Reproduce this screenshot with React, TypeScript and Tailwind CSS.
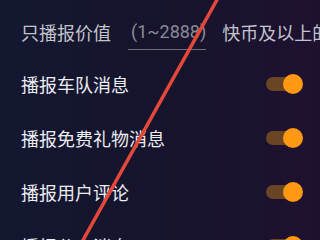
import React from "react";

function Toggle() {
  return (
    <div className="relative w-[37px] h-[20px] flex items-center">
      <div className="w-[34px] h-[14px] rounded-full bg-[#6a4524]" />
      <div className="absolute right-0 top-0 w-[20px] h-[20px] rounded-full bg-[#ff9812]" />
    </div>
  );
}

const rows = ["播报车队消息", "播报免费礼物消息", "播报用户评论", "播报分享消息"];

export default function App() {
  return (
    <div
      className="relative w-[320px] h-[240px] overflow-hidden bg-gradient-to-r from-[#131730] via-[#16142c] to-[#1e1130]"
      style={{ fontFamily: '"Noto Sans CJK SC", "Noto Sans", sans-serif' }}
    >
      <div className="flex flex-col">
        <div className="h-[57px] pt-[6px] flex items-center pl-[21px] whitespace-nowrap">
          <span className="text-[18px] leading-none text-[#c4c4cc]">只播报价值</span>
          <div className="ml-[17px] w-[80px] relative flex items-center h-[32px]">
            <span
              className="pl-[3px] text-[18px] leading-none text-[#8a8a96]"
              style={{ fontFamily: 'Roboto, "Noto Sans", sans-serif' }}
            >
              (1~2888)
            </span>
            <div className="absolute left-0 right-0 bottom-[-2px] h-[1px] bg-[#6c6c7a]" />
          </div>
          <span className="ml-[16px] text-[18px] leading-none text-[#c4c4cc]">快币及以上的礼物</span>
        </div>
        {rows.map((r) => (
          <div key={r} className="h-[54px] flex items-center justify-between pl-[21px] pr-[17px]">
            <span className="text-[18px] leading-none text-[#ececf2]">{r}</span>
            <Toggle />
          </div>
        ))}
      </div>
      <svg className="absolute inset-0 pointer-events-none" width="320" height="240" viewBox="0 0 320 240">
        <line x1="218" y1="-2" x2="82" y2="242" stroke="#e3483b" strokeWidth="3.5" strokeLinecap="round" />
      </svg>
    </div>
  );
}
